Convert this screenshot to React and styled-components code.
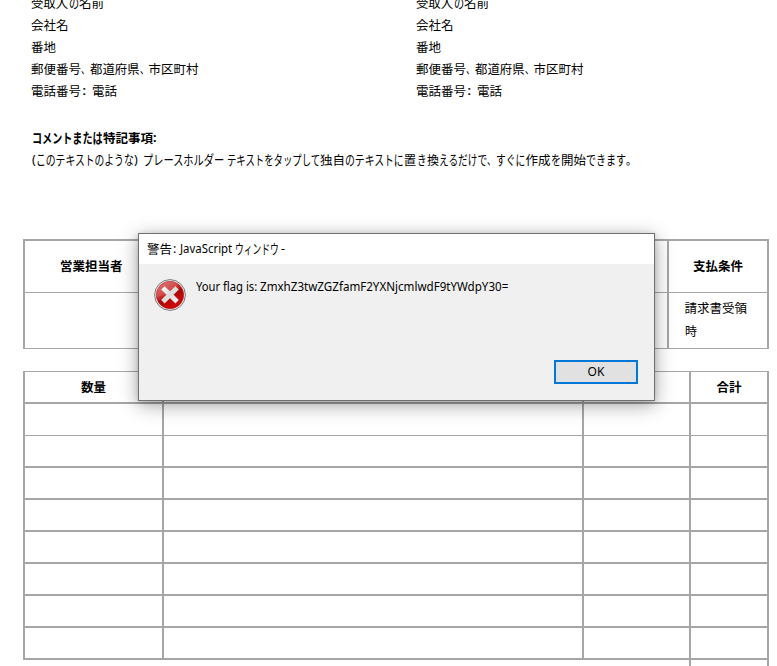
import React, { useLayoutEffect, useRef } from "react";
import styled, { createGlobalStyle } from "styled-components";

const GlobalStyle = createGlobalStyle`
  * { box-sizing: border-box; }
  html, body { margin: 0; background: #fff; overflow: hidden; }
  body {
    color: #000;
    font-family: "Noto Sans CJK JP", sans-serif;
    font-size: 12.5px;
    line-height: 22px;
  }
`;

const LINE = "#a6a6a6";

const Page = styled.main`
  position: relative;
  width: 777px;
  height: 666px;
  overflow: hidden;
  display: flex;
  flex-direction: column;
`;

const RunBox = styled.span`
  display: block;
  flex: none;
  width: ${(p) => p.$w}px;
  margin-left: ${(p) => p.$gap || 0}px;
  white-space: pre;
  font-family: ${(p) => (p.$latin ? '"Noto Sans", sans-serif' : "inherit")};
  font-size: ${(p) => (p.$kana ? "13.5px" : "inherit")};
  line-height: ${(p) => (p.$kana ? "20px" : "inherit")};
`;

const RunText = styled.span`
  display: inline-block;
  transform-origin: 0 50%;
`;

/* Condenses a piece of text so that it takes exactly the given advance. */
function Run({ w, gap, latin, kana, children }) {
  const ref = useRef(null);
  useLayoutEffect(() => {
    const el = ref.current;
    el.style.transform = `scaleX(${w / el.offsetWidth})`;
  }, [w, children]);
  return (
    <RunBox $w={w} $gap={gap} $latin={latin} $kana={kana}>
      <RunText ref={ref}>{children}</RunText>
    </RunBox>
  );
}

const Line = styled.div`
  display: flex;
  height: 22px;
  font-weight: ${(p) => (p.$bold ? 700 : 400)};
`;

const Addresses = styled.section`
  display: grid;
  grid-template-columns: 385px 1fr;
  flex: none;
  margin: -8px 0 0 31px;
`;

const Comments = styled.section`
  flex: none;
  margin: 25px 0 0 32px;
`;

function Address() {
  return (
    <div>
      <Line><Run w={37.5}>受取人</Run><Run w={10.5} kana>の</Run><Run w={25}>名前</Run></Line>
      <Line><Run w={38}>会社名</Run></Line>
      <Line><Run w={25}>番地</Run></Line>
      <Line>
        <Run w={50}>郵便番号</Run><Run w={9}>、</Run>
        <Run w={49.5}>都道府県</Run><Run w={9}>、</Run>
        <Run w={50}>市区町村</Run>
      </Line>
      <Line><Run w={50}>電話番号</Run><Run w={4} gap={1} latin>:</Run><Run w={25} gap={6}>電話</Run></Line>
    </div>
  );
}

const Terms = styled.section`
  display: grid;
  flex: none;
  grid-template-columns: 642px 98px;
  grid-template-rows: 51px 55px;
  column-gap: 2px;
  row-gap: 1px;
  width: 746px;
  margin: 68px 0 0 23px;
  padding: 2px 0 1px;
  border: solid ${LINE};
  border-width: 0 2px;
  background: ${LINE};
`;

const Cell = styled.div`
  display: flex;
  align-items: center;
  justify-content: center;
  background: #fff;
  font-weight: 700;
`;

const TermHeading = styled(Cell)`
  padding-bottom: 2px;
`;

const SellerHeading = styled(TermHeading)`
  justify-content: flex-start;
  padding-left: 35px;
`;

const TermText = styled.div`
  padding: 3px 0 0 15.5px;
  line-height: 23px;
  background: #fff;
`;

const Items = styled.section`
  display: grid;
  flex: none;
  grid-template-columns: 137px 418px 105px 76px;
  grid-auto-rows: 32px;
  column-gap: 2px;
  width: 746px;
  margin: 22px 0 0 23px;
  border: solid ${LINE};
  border-width: 1px 2px 0;
  background: ${LINE};
`;

const ItemCell = styled(Cell)`
  border-bottom: ${(p) => p.$rule}px solid ${LINE};
`;

const Totals = styled.div`
  flex: none;
  width: 80px;
  height: 6px;
  margin-left: 689px;
  border: solid ${LINE};
  border-width: 0 2px;
`;

const Dialog = styled.section`
  position: absolute;
  left: 138px;
  top: 233px;
  width: 517px;
  height: 168px;
  display: flex;
  flex-direction: column;
  border: 1px solid #707070;
  background: #f0f0f0;
  box-shadow: 0 4px 18px rgba(0, 0, 0, 0.36), 0 1px 5px rgba(0, 0, 0, 0.15);
`;

const TitleBar = styled.header`
  display: flex;
  height: 30px;
  flex: none;
  padding: 4px 0 0 8px;
  background: #fff;
`;

const Body = styled.div`
  display: flex;
  height: 96px;
  padding: 15px 0 0 15px;
`;

const Message = styled.div`
  display: flex;
  height: 22px;
  margin: -3px 0 0 10px;
`;

const OkButton = styled.button`
  align-self: flex-end;
  display: flex;
  justify-content: center;
  width: 84px;
  height: 24px;
  margin-right: 16px;
  padding: 0;
  border: 2px solid #0078d7;
  border-radius: 0;
  background: #e1e1e1;
  color: #000;
  font: 12px/20px "Noto Sans", sans-serif;
`;

function ErrorIcon() {
  return (
    <svg width="32" height="32" viewBox="0 0 32 32">
      <defs>
        <linearGradient id="red" x1="0.2" y1="0" x2="0.8" y2="1">
          <stop offset="0" stopColor="#dc5c5c" />
          <stop offset="0.45" stopColor="#c42424" />
          <stop offset="0.5" stopColor="#a90808" />
          <stop offset="1" stopColor="#e00808" />
        </linearGradient>
        <linearGradient id="cross" x1="0" y1="0" x2="1" y2="1">
          <stop offset="0" stopColor="#ffffff" />
          <stop offset="0.5" stopColor="#dcdcdc" />
          <stop offset="1" stopColor="#f8f8f8" />
        </linearGradient>
      </defs>
      <circle cx="16" cy="16" r="15.4" fill="#f4f4f4" stroke="#777" strokeWidth="1" />
      <circle cx="16" cy="16" r="13.7" fill="url(#red)" stroke="#a61a1a" strokeWidth="0.6" />
      <path d="M2.8 18C7 17.5 20 14 24 5A13.5 13.5 0 0 0 2.8 18Z" fill="#fff" opacity="0.14" />
      <path
        d="M10.6 7.4L16 12.5L21.4 7.4L24.6 10.6L19.4 15.7L24.6 21L21.4 24.2L16 19L10.6 24.2L7.4 21L12.6 15.7L7.4 10.6Z"
        fill="url(#cross)" stroke="#f0e0e0" strokeWidth="0.4"
      />
    </svg>
  );
}

const rules = [2, 1, 2, 2, 2, 2, 2, 2, 2];
const headings = ["数量", null, null, "合計"];

export default function App() {
  return (
    <>
      <GlobalStyle />
      <Page>
        <Addresses><Address /><Address /></Addresses>
        <Comments>
          <Line $bold>
            <Run w={71} kana>コメントまたは</Run><Run w={50}>特記事項</Run><Run w={4} latin>:</Run>
          </Line>
          <Line>
            <Run w={4} latin>(</Run><Run w={98} kana>このテキストのような</Run><Run w={4} latin>)</Run>
            <Run w={81} gap={5} kana>プレースホルダー</Run><Run w={93} gap={3} kana>テキストをタップして</Run>
            <Run w={25}>独自</Run><Run w={59} kana>のテキストに</Run><Run w={12.5}>置</Run>
            <Run w={10} kana>き</Run><Run w={12.5}>換</Run><Run w={48} kana>えるだけで</Run><Run w={9}>、</Run>
            <Run w={29.5} kana>すぐに</Run><Run w={25}>作成</Run><Run w={10.5} kana>を</Run>
            <Run w={25}>開始</Run><Run w={40} kana>できます</Run><Run w={11}>。</Run>
          </Line>
        </Comments>

        <Terms>
          <SellerHeading><Run w={63}>営業担当者</Run></SellerHeading>
          <TermHeading><Run w={50}>支払条件</Run></TermHeading>
          <TermText />
          <TermText>
            <Run w={63}>請求書受領</Run>
            <Run w={12.5}>時</Run>
          </TermText>
        </Terms>

        <Items>
          {rules.map((rule, row) =>
            headings.map((heading, col) => (
              <ItemCell key={`${row}-${col}`} $rule={rule}>
                {row === 0 && heading ? <Run w={25}>{heading}</Run> : null}
              </ItemCell>
            ))
          )}
        </Items>
        <Totals />

        <Dialog>
          <TitleBar>
            <Run w={25}>警告</Run><Run w={3} gap={1} latin>:</Run>
            <Run w={52} gap={4} latin>JavaScript</Run>
            <Run w={44} gap={3} kana>ウィンドウ</Run><Run w={4} gap={2} latin>-</Run>
          </TitleBar>
          <Body>
            <ErrorIcon />
            <Message>
              <Run w={61} latin>Your flag is:</Run>
              <Run w={248.5} gap={3} latin>ZmxhZ3twZGZfamF2YXNjcmlwdF9tYWdpY30=</Run>
            </Message>
          </Body>
          <OkButton>OK</OkButton>
        </Dialog>
      </Page>
    </>
  );
}
